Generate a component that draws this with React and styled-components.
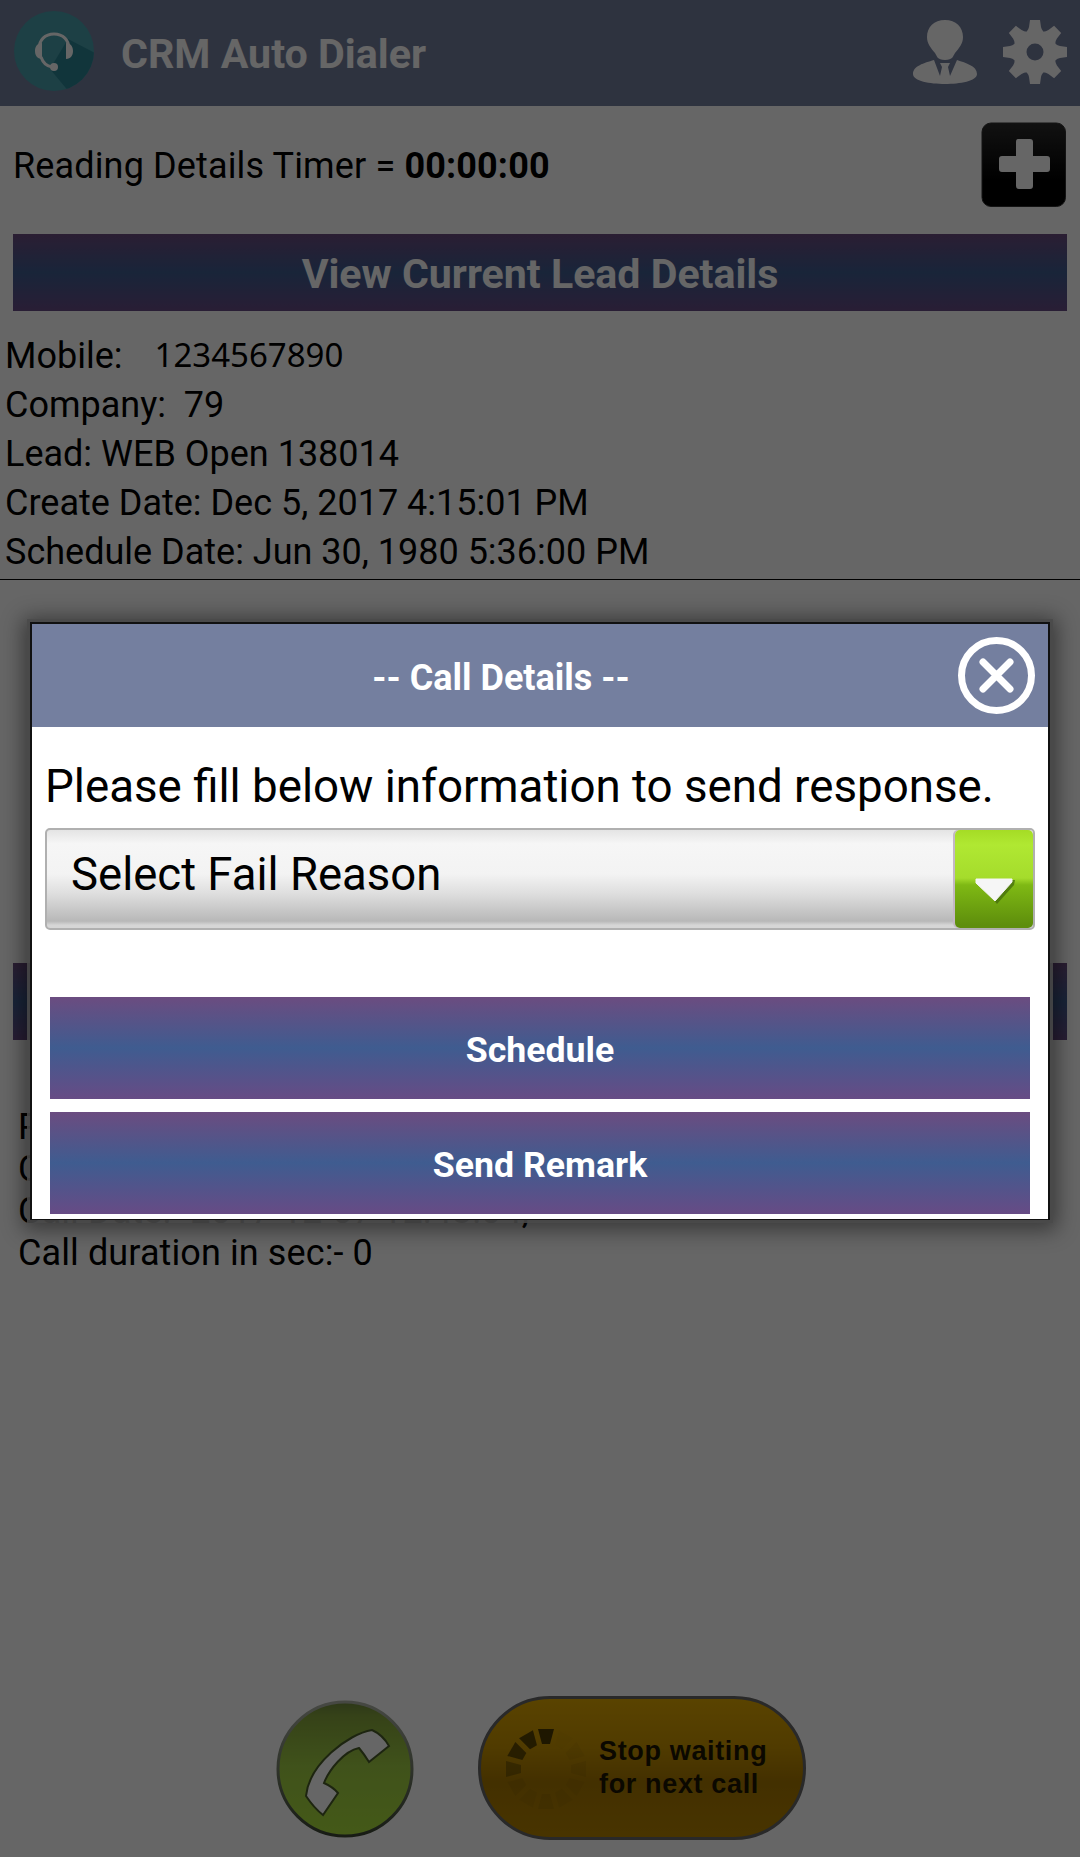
import React from "react";
import styled, { createGlobalStyle } from "styled-components";

const GlobalStyle = createGlobalStyle`
  * {
    box-sizing: border-box;
  }

  body {
    margin: 0;
    background-color: #ffffff;
    font-family: Roboto, "Liberation Sans", sans-serif;
    color: #000000;
  }
`;

const Screen = styled.div`
  position: relative;
  width: 100%;
  height: 1857px;
  overflow: hidden;
  display: flex;
  flex-direction: column;
`;

const Header = styled.header`
  height: 106px;
  flex: none;
  padding: 0 13px 2px;
  display: flex;
  align-items: center;
  background-color: #747f9f;
`;

const AppTitle = styled.h1`
  margin: 4px auto 0 26px;
  font-size: 41.2px;
  line-height: 50px;
  font-weight: 700;
  color: #ffffff;
`;

const HeaderIcons = styled.div`
  display: flex;
  gap: 26px;
`;

const TimerRow = styled.div`
  height: 128px;
  flex: none;
  padding: 15px 13px 0;
  display: flex;
  justify-content: space-between;
`;

const Timer = styled.p`
  margin: 24px 0 0;
  font-size: 36px;
  line-height: 42px;
  letter-spacing: 0.14px;
`;

const AddButton = styled.button`
  width: 86px;
  height: 86px;
  padding: 0;
  border: none;
  background: none;
`;

const gradient = `linear-gradient(180deg, #6b4c80 0%, #3f5c90 50%, #674b85 100%)`;

const Bar = styled.button`
  display: block;
  height: 77px;
  flex: none;
  margin: 0 13px;
  padding: 2px 0 0;
  border: none;
  background: ${gradient};
  font-family: inherit;
  font-size: 41.1px;
  font-weight: 700;
  color: #ffffff;
`;

const LeadDetails = styled.section`
  height: 269px;
  flex: none;
  padding: 21px 5px 0;
  border-bottom: 1px solid #000000;
`;

const LeadLine = styled.p`
  margin: 0;
  font-size: 36px;
  line-height: 49px;
  white-space: pre;
`;

const Mobile = styled.span`
  position: relative;
  top: -1px;
  margin-left: 32px;
  font-family: "Noto Sans", sans-serif;
  font-size: 33px;
  line-height: 40px;
`;

const LastCall = styled.section`
  margin-top: 383px;
  display: flex;
  flex-direction: column;
`;

const CallLog = styled.div`
  padding: 66px 18px 0;
`;

const CallLine = styled.p`
  margin: 0;
  font-size: 36px;
  line-height: 42px;
  letter-spacing: 0.1px;
`;

const Footer = styled.footer`
  margin-top: auto;
  padding: 0 0 17px 272px;
  display: flex;
  align-items: center;
  gap: 64px;
`;

const StopButton = styled.button`
  width: 328px;
  height: 144px;
  padding: 0 0 0 24px;
  display: flex;
  align-items: center;
  gap: 10px;
  border: 3px solid #666666;
  border-radius: 72px;
  background: linear-gradient(180deg, #e0a800 0%, #c89400 35%, #a87800 60%, #b48300 100%);
  text-align: left;
`;

const StopLabel = styled.span`
  font-family: "Liberation Sans", Arial, sans-serif;
  font-size: 27px;
  line-height: 33px;
  font-weight: 700;
  letter-spacing: 0.65px;
  color: #1c1500;
`;

const Scrim = styled.div`
  position: absolute;
  inset: 0;
  padding: 622px 30px 0;
  background-color: rgba(0, 0, 0, 0.6);
`;

const Dialog = styled.div`
  height: 598px;
  border: 2px solid #111111;
  border-bottom-width: 1px;
  background-color: #ffffff;
  box-shadow: 0 0 0 3px rgba(74, 74, 74, 0.85), 0 3px 20px 7px rgba(0, 0, 0, 0.45);
`;

const DialogHeader = styled.div`
  height: 103px;
  padding: 0 13px 0 0;
  display: flex;
  align-items: center;
  background-color: #747f9f;
`;

const DialogTitle = styled.h2`
  flex: 1;
  margin: 5px 0 0 12px;
  font-size: 36px;
  line-height: 42px;
  font-weight: 700;
  text-align: center;
  color: #ffffff;
`;

const CloseButton = styled.button`
  width: 77px;
  height: 77px;
  padding: 0;
  border: none;
  background: none;
`;

const DialogBody = styled.div`
  padding: 33px 13px 0;
`;

const Message = styled.p`
  margin: 0;
  font-size: 45.7px;
  line-height: 54px;
  white-space: nowrap;
`;

const Select = styled.div`
  height: 102px;
  margin-top: 14px;
  display: flex;
  border: 2px solid #b0b0b0;
  border-radius: 5px;
  background: linear-gradient(180deg, #e4e4e4 0%, #f6f6f6 14%, #f3f3f3 45%, #dedede 65%, #b8b8b8 93%, #d6d6d6 97%);
`;

const SelectValue = styled.span`
  flex: 1;
  padding: 18px 0 0 24px;
  font-size: 45.5px;
  line-height: 54px;
`;

const SelectArrow = styled.span`
  width: 78px;
  padding: 47px 0 0 19px;
  border-radius: 5px;
  box-shadow: -2px 0 0 #c4b8c4;
  background: linear-gradient(180deg, #a5dc25 0%, #b0e832 15%, #a5dc2c 49%, #7fb914 56%, #5e8e0c 97%);
`;

const Actions = styled.div`
  margin: 67px 5px 0;
  display: flex;
  flex-direction: column;
  gap: 13px;
`;

const ActionButton = styled.button`
  height: 102px;
  padding: 3px 0 0;
  border: none;
  background: ${gradient};
  font-family: inherit;
  font-size: 35.7px;
  font-weight: 700;
  color: #ffffff;
`;

const Icon = styled.svg`
  display: block;
  flex: none;
`;

const LogoIcon = () => (
  <Icon width="82" height="82" viewBox="0 0 82 82">
    <defs>
      <clipPath id="logo">
        <circle cx="41" cy="40" r="40" />
      </clipPath>
    </defs>
    <circle cx="41" cy="40" r="40" fill="#49a0ac" />
    <path d="M55 28L82 42V82H57L37 58Z" fill="#2b8494" clipPath="url(#logo)" />
    <path
      d="M26 38c0-9 6-15 15-15s15 6 15 15M28 46c2 6 5 9 11 10"
      fill="none"
      stroke="#ffffff"
      strokeWidth="3"
    />
    <path d="M29 32v16c-5 0-7-4-7-8s2-8 7-8zM53 32v16c5 0 7-4 7-8s-2-8-7-8z" fill="#ffffff" />
    <circle cx="41" cy="56" r="4" fill="#ffffff" />
  </Icon>
);

const UserIcon = () => (
  <Icon width="64" height="64" viewBox="0 0 64 64" fill="#ffffff">
    <path d="M32 0c11 0 18 7 18 17 0 7-4 11-8 16-2 3-2 7-10 7s-8-4-10-7c-4-5-8-9-8-16C14 7 21 0 32 0z" />
    <path d="M21 40C11 43 0 46 0 54c0 7 17 10 32 10s32-3 32-10c0-8-11-11-20-14l-7 16-2-9 2-4H27l2 4-2 9z" />
  </Icon>
);

const GearIcon = () => (
  <Icon width="64" height="64" viewBox="-32 -32 64 64">
    <g fill="#ffffff">
      {[0, 45, 90, 135, 180, 225, 270, 315].map((angle) => (
        <path key={angle} d="M-5 -32H5L6 -25Q7 -20 13 -17H-13Q-7 -20 -6 -25Z" transform={`rotate(${angle})`} />
      ))}
    </g>
    <circle r="15" fill="none" stroke="#ffffff" strokeWidth="13" />
  </Icon>
);

const PlusIcon = () => (
  <Icon width="86" height="86" viewBox="0 0 86 86">
    <defs>
      <linearGradient id="plus" x1="0" y1="0" x2="0" y2="1">
        <stop offset="0" stopColor="#2c2c2c" />
        <stop offset="0.7" stopColor="#000000" />
      </linearGradient>
    </defs>
    <rect x="1" y="2" width="83.5" height="83.5" rx="9" fill="url(#plus)" stroke="#333333" />
    <path
      d="M37 18h12q3 0 3 3v14h14q3 0 3 3v10q0 3-3 3H52v14q0 3-3 3H38q-3 0-3-3V51H21q-3 0-3-3V38q0-3 3-3h14V21q0-3 2-3z"
      fill="#ffffff"
    />
  </Icon>
);

const CloseIcon = () => (
  <Icon width="77" height="77" viewBox="0 0 77 77" fill="none" stroke="#ffffff">
    <circle cx="38.5" cy="38.5" r="35" strokeWidth="7" />
    <path d="M25 25L52 52M52 25L25 52" strokeWidth="7" strokeLinecap="round" />
  </Icon>
);

const ArrowIcon = () => (
  <Icon width="42" height="28" viewBox="0 0 42 28">
    <path d="M4 3H41L40 8L23 27Z" fill="#47700c" opacity="0.8" />
    <path d="M2 2H38V5L21 24L2 6Z" fill="#f6f6f6" stroke="#f6f6f6" strokeLinejoin="round" />
  </Icon>
);

const CallIcon = () => (
  <Icon width="142" height="142" viewBox="0 0 142 142">
    <defs>
      <linearGradient id="call" x1="0" y1="0" x2="0" y2="1">
        <stop offset="0" stopColor="#6f8a3c" />
        <stop offset="0.1" stopColor="#86a53c" />
        <stop offset="0.48" stopColor="#a0cd44" />
        <stop offset="1" stopColor="#abe03c" />
      </linearGradient>
      <linearGradient id="rim" x1="0" y1="0" x2="0" y2="1">
        <stop offset="0" stopColor="#b0b5a8" />
        <stop offset="0.5" stopColor="#75806a" />
        <stop offset="1" stopColor="#3c4634" />
      </linearGradient>
    </defs>
    <circle cx="73" cy="72" r="67" fill="url(#call)" stroke="url(#rim)" strokeWidth="3" />
    <path
      d="M100 33C76 37 37 67 34 99Q42 111 51 118L66 96Q61 90 52 86C57 73 72 54 87 51Q92 57 97 65L117 49Q111 38 100 33Z"
      fill="#ffffff"
      stroke="#4a5c2a"
      strokeWidth="2"
    />
  </Icon>
);

const Spinner = () => (
  <Icon width="84" height="92" viewBox="-41 -47 84 92" fill="#4c3b00">
    {[1, 0.02, 0.06, 0.1, 0.06, 0.06, 0.1, 0.06, 0.1, 0.45, 0.8, 0.9].map((opacity, i) => (
      <path key={i} d="M-8 -40H8L4 -25H-4Z" opacity={opacity} transform={`rotate(${i * 30})`} />
    ))}
  </Icon>
);

function App() {
  return (
    <>
      <GlobalStyle />
      <Screen>
        <Header>
          <LogoIcon />
          <AppTitle>CRM Auto Dialer</AppTitle>
          <HeaderIcons>
            <UserIcon />
            <GearIcon />
          </HeaderIcons>
        </Header>
        <TimerRow>
          <Timer>
            Reading Details Timer = <b>00:00:00</b>
          </Timer>
          <AddButton>
            <PlusIcon />
          </AddButton>
        </TimerRow>
        <Bar>View Current Lead Details</Bar>
        <LeadDetails>
          <LeadLine>
            Mobile:<Mobile>1234567890</Mobile>
          </LeadLine>
          <LeadLine>{"Company:  79"}</LeadLine>
          <LeadLine>Lead: WEB Open 138014</LeadLine>
          <LeadLine>Create Date: Dec 5, 2017 4:15:01 PM</LeadLine>
          <LeadLine>Schedule Date: Jun 30, 1980 5:36:00 PM</LeadLine>
        </LeadDetails>
        <LastCall>
          <Bar />
          <CallLog>
            <CallLine>P</CallLine>
            <CallLine>C</CallLine>
            <CallLine>Call Date:- 2017-12-07 12:43:04,</CallLine>
            <CallLine>Call duration in sec:- 0</CallLine>
          </CallLog>
        </LastCall>
        <Footer>
          <CallIcon />
          <StopButton>
            <Spinner />
            <StopLabel>
              Stop waiting
              <br />
              for next call
            </StopLabel>
          </StopButton>
        </Footer>
        <Scrim>
          <Dialog>
            <DialogHeader>
              <DialogTitle>-- Call Details --</DialogTitle>
              <CloseButton>
                <CloseIcon />
              </CloseButton>
            </DialogHeader>
            <DialogBody>
              <Message>Please fill below information to send response.</Message>
              <Select>
                <SelectValue>Select Fail Reason</SelectValue>
                <SelectArrow>
                  <ArrowIcon />
                </SelectArrow>
              </Select>
              <Actions>
                <ActionButton>Schedule</ActionButton>
                <ActionButton>Send Remark</ActionButton>
              </Actions>
            </DialogBody>
          </Dialog>
        </Scrim>
      </Screen>
    </>
  );
}

export default App;
